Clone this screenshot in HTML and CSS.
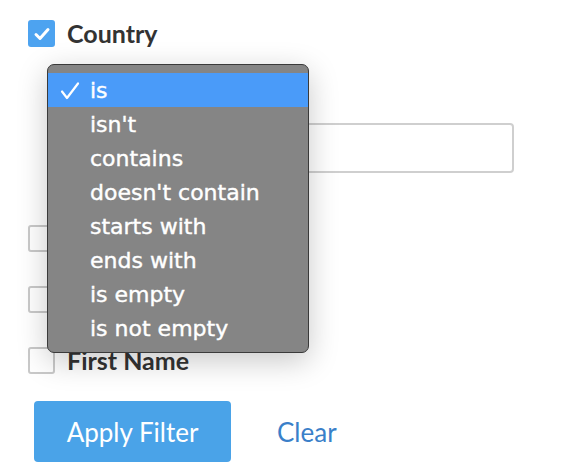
FILE: index.html
```html
<!DOCTYPE html>
<html>
<head>
<meta charset="utf-8">
<link rel="stylesheet" href="styles.css">
</head>
<body>
<div class="panel">
  <label class="field">
    <span class="box checked"><svg viewBox="0 0 28 28" width="28" height="28"><path d="M8 14.5l4 4 8-9" fill="none" stroke="#fff" stroke-width="3" stroke-linecap="round" stroke-linejoin="round"/></svg></span>
    <span class="label">Country</span>
  </label>
  <div class="cond">
    <div class="select-spacer"></div>
    <div class="text-input"></div>
  </div>
  <label class="field"><span class="box"></span><span class="label">Email</span></label>
  <label class="field"><span class="box"></span><span class="label">Last Name</span></label>
  <label class="field"><span class="box"></span><span class="label">First Name</span></label>
  <div class="actions">
    <button class="apply">Apply Filter</button>
    <a class="clear">Clear</a>
  </div>

  <ul class="menu">
    <li class="selected"><svg class="tick" viewBox="0 0 20 20" width="20" height="20"><path d="M2 10.5l5 6.5L18 2.5" fill="none" stroke="#fff" stroke-width="2.2" stroke-linecap="round" stroke-linejoin="round"/></svg>is</li>
    <li>isn't</li>
    <li>contains</li>
    <li>doesn't contain</li>
    <li>starts with</li>
    <li>ends with</li>
    <li>is empty</li>
    <li>is not empty</li>
  </ul>
</div>
</body>
</html>
```
FILE: styles.css
```css
html, body {
  margin: 0;
  padding: 0;
  background: #fff;
}
.panel {
  position: relative;
  width: 564px;
  height: 476px;
  padding: 20px 0 0 28px;
  box-sizing: border-box;
  font-family: Lato, "Open Sans", sans-serif;
  color: #333;
}
.field {
  display: flex;
  align-items: center;
  height: 27px;
}
.box {
  width: 27px;
  height: 27px;
  box-sizing: border-box;
  border: 2px solid #c9c9c9;
  border-radius: 3px;
  display: flex;
  align-items: center;
  justify-content: center;
}
.box.checked {
  background: #4da3f0;
  border-color: #4da3f0;
}
.box svg { flex: none; }
.label {
  margin-left: 12px;
  font-size: 25px;
  font-weight: 700;
  color: #333;
  line-height: 27px;
}
.cond {
  padding: 16px 0 0 20px;
  height: 162px;
  box-sizing: border-box;
}
.select-spacer { height: 60px; }
.text-input {
  margin-left: 20px;
  width: 446px;
  height: 50px;
  box-sizing: border-box;
  border: 2px solid #cfcfcf;
  border-radius: 4px;
}
.field + .field { margin-top: 34px; }
.cond + .field { margin-top: 16px; }
.actions {
  display: flex;
  align-items: center;
  margin-top: 27px;
  margin-left: 6px;
}
.apply {
  width: 197px;
  height: 61px;
  border: none;
  border-radius: 4px;
  background: #4aa3e8;
  color: #fff;
  font-family: Lato, "Open Sans", sans-serif;
  font-size: 26px;
  padding: 0;
}
.clear {
  margin-left: 46px;
  font-size: 26px;
  color: #3a80c9;
}
.menu {
  position: absolute;
  left: 47px;
  top: 64px;
  width: 262px;
  height: 289px;
  box-sizing: border-box;
  margin: 0;
  padding: 8px 0;
  list-style: none;
  background: #858585;
  border: 1px solid #3a3a3a;
  border-radius: 7px;
  box-shadow: 0 8px 30px rgba(0,0,0,0.22);
  font-family: "DejaVu Sans", Verdana, sans-serif;
  font-size: 22px;
  color: #fff;
  -webkit-text-stroke: 0.4px #fff;
}
.menu li {
  position: relative;
  height: 34px;
  line-height: 35px;
  padding-left: 42px;
}
.menu li.selected {
  background: #4a9bf9;
}
.tick {
  position: absolute;
  left: 12px;
  top: 8px;
}
```
